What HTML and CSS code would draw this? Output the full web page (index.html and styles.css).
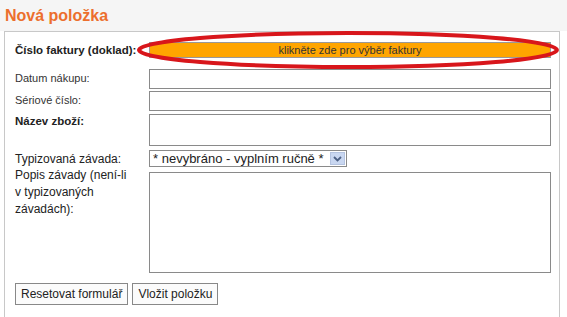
FILE: index.html
```html
<!DOCTYPE html>
<html lang="cs">
<head>
  <meta charset="UTF-8">
  <title>Nová položka</title>
  <link rel="stylesheet" href="styles.css">
</head>
<body>
  <div class="head">
    <h1>Nová položka</h1>
  </div>
  <form class="box">
    <div class="row row-invoice">
      <label class="bold">Číslo faktury (doklad):</label>
      <div class="invoice-wrap">
        <button type="button" class="invoice-btn">klikněte zde pro výběr faktury</button>
        <svg class="mark" width="430" height="42" viewBox="0 0 430 42">
          <ellipse cx="213" cy="20" rx="209" ry="17" fill="none" stroke="#d8161b" stroke-width="4"/>
        </svg>
      </div>
    </div>
    <div class="row row-small">
      <label class="small">Datum nákupu:</label>
      <input type="text" class="field">
    </div>
    <div class="row row-small2">
      <label class="small">Sériové číslo:</label>
      <input type="text" class="field">
    </div>
    <div class="row row-name">
      <label class="bold">Název zboží:</label>
      <textarea class="field name"></textarea>
    </div>
    <div class="row row-type">
      <label>Typizovaná závada:</label>
      <div class="select">
        <span class="select-text">* nevybráno - vyplním ručně *</span>
        <span class="select-arrow">
          <svg width="9" height="6" viewBox="0 0 9 6"><path d="M1 1 L4.5 4.5 L8 1" fill="none" stroke="#4d6185" stroke-width="1.8"/></svg>
        </span>
      </div>
    </div>
    <div class="row row-desc">
      <label>Popis závady (není-li v typizovaných závadách):</label>
      <textarea class="field desc"></textarea>
    </div>
    <div class="actions">
      <button type="reset" class="btn">Resetovat formulář</button>
      <button type="button" class="btn">Vložit položku</button>
    </div>
  </form>
</body>
</html>
```
FILE: styles.css
```css
body {
  margin: 0;
  font-family: "Liberation Sans", Arial, sans-serif;
  color: #222;
  background: #fff;
}
.head {
  background: #f5f5f5;
  height: 31px;
  padding-left: 5px;
}
h1 {
  margin: 0;
  padding-top: 7px;
  font-size: 16px;
  font-weight: bold;
  color: #ec6f2d;
}
.box {
  margin-left: 4px;
  width: 556px;
  border: 1px solid #c8c8c8;
  border-bottom: none;
  padding: 10px 0 20px 10px;
  box-sizing: border-box;
  height: 300px;
  background: #fff;
}
.row {
  display: grid;
  grid-template-columns: 134px 402px;
  align-items: start;
}
.row label {
  font-size: 12px;
  line-height: 16px;
}
label.bold {
  font-weight: bold;
  font-size: 11.5px;
  line-height: 14px;
}
label.small {
  font-size: 11px;
  color: #333;
  padding-top: 1px;
}
.row-invoice { align-items: center; }
.row-small { margin-top: 11px; }
.row-small2 { margin-top: 2px; }
.row-name { margin-top: 3px; }
.row-type { margin-top: 4px; align-items: center; }
.row-desc { margin-top: 5px; }
.row-desc label { margin-top: -5px; padding-right: 16px; line-height: 17px; }
.invoice-wrap {
  position: relative;
}
.invoice-btn {
  display: block;
  width: 402px;
  height: 16px;
  margin: 0;
  padding: 0;
  border: 1px solid #999;
  background: #ffa500;
  font-family: inherit;
  font-size: 11px;
  color: #333;
}
.mark {
  position: absolute;
  left: -14px;
  top: -12px;
}
.field {
  display: block;
  width: 402px;
  height: 20px;
  margin: 0;
  border: 1px solid #8a8a8a;
  box-sizing: border-box;
  background: #fff;
  resize: none;
}
.field.name { height: 32px; }
.field.desc { height: 101px; }
.select {
  display: flex;
  align-items: center;
  width: 198px;
  height: 17px;
  border: 1px solid #8a8a8a;
  box-sizing: border-box;
  font-size: 13px;
}
.select-text {
  flex: 1;
  padding-left: 3px;
  line-height: 15px;
  white-space: nowrap;
}
.select-arrow {
  width: 15px;
  height: 13px;
  margin-right: 1px;
  display: flex;
  align-items: center;
  justify-content: center;
  background: #c9d7f1;
  border: 1px solid #b4c3e0;
  box-sizing: border-box;
}
.actions {
  display: flex;
  gap: 4px;
  margin-top: 10px;
}
.btn {
  height: 22px;
  padding: 0 5px;
  border: 1px solid #888;
  background: #fbfbfb;
  font-family: inherit;
  font-size: 12px;
  color: #222;
}
```
